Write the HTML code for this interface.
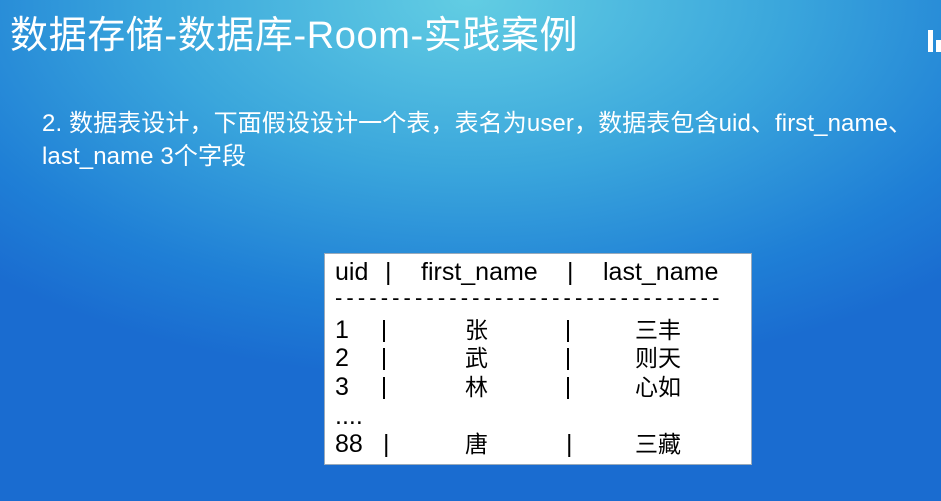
<!DOCTYPE html>
<html><head><meta charset="utf-8"><style>
html,body{margin:0;padding:0}
body{width:941px;height:501px;overflow:hidden;position:relative;
background:radial-gradient(ellipse 700px 380px at 470px 0px,#62cde3 0%,#3aa6dc 45%,#1f7fd6 80%,#1a6cd0 100%);
font-family:"Liberation Sans","Noto Sans CJK SC",sans-serif;color:#fff}
.t{position:absolute;left:10px;top:4px;font-size:38px;letter-spacing:0.6px;white-space:nowrap}
.p{position:absolute;left:42px;top:107px;font-size:24px;line-height:33px;white-space:nowrap;letter-spacing:0.1px}
.box{position:absolute;left:324px;top:253px;width:428px;height:212px;background:#fff;border:1px solid #9ab;box-sizing:border-box;color:#000;font-size:25px}
.r{position:absolute;left:10px;white-space:nowrap;height:28px;line-height:28px}
.r span{position:absolute;top:0}
.c{font-size:23px}
.bar{position:absolute;width:2px;height:22px;background:#000;top:4px}
</style></head><body>
<div class="t">数据存储-数据库-Room-实践案例</div>
<div style="position:absolute;left:928px;top:30px;width:5px;height:22px;background:#fff"></div>
<div style="position:absolute;left:936px;top:40px;width:5px;height:12px;background:#fff"></div>
<div class="p">2. 数据表设计，下面假设设计一个表，表名为user，数据表包含uid、first_name、<br>last_name 3个字段</div>
<div class="box">
 <div class="r" style="top:4px;width:400px"><span style="left:0">uid</span><span style="left:50px">|</span><span style="left:86px">first_name</span><span style="left:232px">|</span><span style="left:268px">last_name</span></div>
 <div class="r" style="top:30px;left:10px;font-size:22px;letter-spacing:4.1px">----------------------------------</div>
 <div class="r" style="top:62px"><span style="left:0">1</span><i class="bar" style="left:48px"></i><span class="c" style="left:130px">张</span><i class="bar" style="left:232px"></i><span class="c" style="left:300px">三丰</span></div>
 <div class="r" style="top:90px"><span style="left:0">2</span><i class="bar" style="left:48px"></i><span class="c" style="left:130px">武</span><i class="bar" style="left:232px"></i><span class="c" style="left:300px">则天</span></div>
 <div class="r" style="top:119px"><span style="left:0">3</span><i class="bar" style="left:48px"></i><span class="c" style="left:130px">林</span><i class="bar" style="left:232px"></i><span class="c" style="left:300px">心如</span></div>
 <div class="r" style="top:148px"><span style="left:0">....</span></div>
 <div class="r" style="top:176px"><span style="left:0">88</span><span style="left:48px">|</span><span class="c" style="left:130px">唐</span><span style="left:231px">|</span><span class="c" style="left:300px">三藏</span></div>
</div>
</body></html>
